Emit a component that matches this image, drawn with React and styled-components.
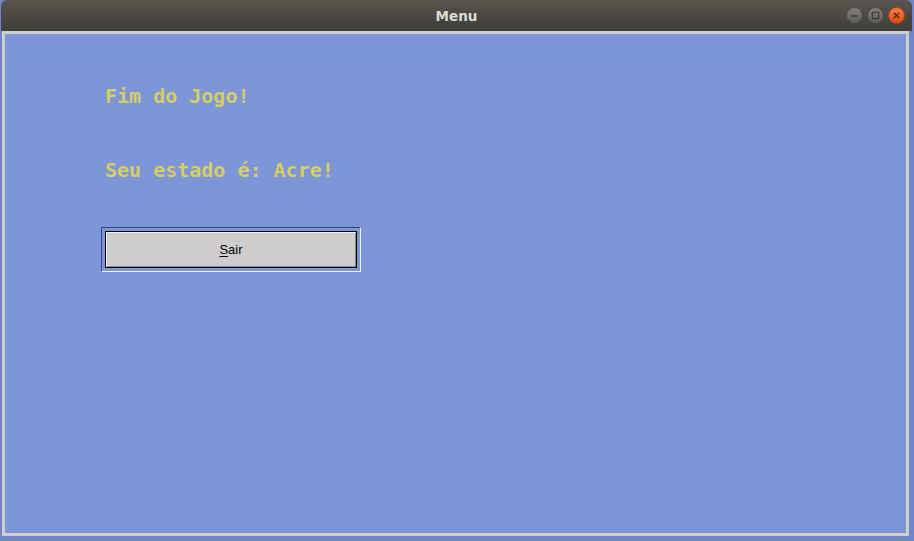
import styled, { createGlobalStyle } from 'styled-components';

const GlobalStyle = createGlobalStyle`
  html, body {
    margin: 0;
    padding: 0;
    width: 914px;
    height: 541px;
    overflow: hidden;
    background: #6f86c9;
  }
`;

const Desktop = styled.div`
  width: 914px;
  height: 541px;
  display: flex;
  flex-direction: column;
  padding-left: 1px;
  box-sizing: border-box;
`;

const TitleBar = styled.div`
  width: 911px;
  height: 31px;
  flex-shrink: 0;
  border-radius: 6px 6px 0 0;
  background: linear-gradient(#59564f, #3e3c38);
  display: flex;
  align-items: center;
  justify-content: center;
  position: relative;
  box-sizing: border-box;
`;

const Title = styled.span`
  font-family: "DejaVu Sans", sans-serif;
  font-weight: bold;
  font-size: 13.5px;
  color: #dfdbd2;
  margin-top: 1px;
`;

const Controls = styled.div`
  position: absolute;
  right: 7px;
  top: 7px;
  display: flex;
  gap: 4px;
`;

const Frame = styled.div`
  margin-left: 1px;
  width: 907px;
  height: 505px;
  border: 3px solid #cfcfcf;
  box-sizing: border-box;
  background: #7c96d8;
  display: flex;
  flex-direction: column;
  align-items: flex-start;
  padding: 50px 0 0 96px;
`;

const Label = styled.div`
  font-family: "DejaVu Sans Mono", monospace;
  font-weight: bold;
  font-size: 20px;
  line-height: 24px;
  color: #d6cd66;
  margin-left: 4px;
  margin-bottom: ${(p) => p.gap}px;
  white-space: pre;
`;

const Ring = styled.div`
  width: 260px;
  height: 45px;
  box-sizing: border-box;
  border: 1px solid;
  border-color: #3b4679 #f4f6ff #f4f6ff #3b4679;
  padding: 3px;
  display: flex;
`;

const Button = styled.button`
  flex: 1;
  margin: 0;
  padding: 0;
  border: 1px solid #000;
  background: #cdcdcd;
  box-shadow: inset 1px 1px 0 #f2f2f2, inset -1px -1px 0 #8a8a8a;
  font-family: "Liberation Sans", Arial, sans-serif;
  font-size: 13px;
  color: #000;
  display: flex;
  align-items: center;
  justify-content: center;
  cursor: pointer;
  u {
    text-decoration: underline;
    text-underline-offset: 2px;
  }
`;

const WinButton = ({ kind }) => {
  const close = kind === 'close';
  return (
    <svg width="17" height="17" viewBox="0 0 16 16">
      <defs>
        <linearGradient id={`g-${kind}`} x1="0" y1="0" x2="0" y2="1">
          <stop offset="0" stopColor={close ? '#f37b4e' : '#85827c'} />
          <stop offset="1" stopColor={close ? '#df4b14' : '#5d5b56'} />
        </linearGradient>
      </defs>
      <circle cx="8" cy="8" r="7.5" fill={`url(#g-${kind})`} stroke={close ? '#b83d10' : '#45433f'} strokeWidth="0.8" />
      {kind === 'min' && <path d="M4.5 8.5h7" stroke="#3a3935" strokeWidth="1.2" />}
      {kind === 'max' && <rect x="5" y="5" width="6" height="6" fill="none" stroke="#3a3935" strokeWidth="1.1" />}
      {close && <path d="M5.5 5.5l5 5M10.5 5.5l-5 5" stroke="#4a2010" strokeWidth="1.2" />}
    </svg>
  );
};

export default function App() {
  return (
    <>
      <GlobalStyle />
      <Desktop>
        <TitleBar>
          <Title>Menu</Title>
          <Controls>
            <WinButton kind="min" />
            <WinButton kind="max" />
            <WinButton kind="close" />
          </Controls>
        </TitleBar>
        <Frame>
          <Label gap={50}>Fim do Jogo!</Label>
          <Label gap={45}>Seu estado é: Acre!</Label>
          <Ring>
            <Button>
              <span><u>S</u>air</span>
            </Button>
          </Ring>
        </Frame>
      </Desktop>
    </>
  );
}
